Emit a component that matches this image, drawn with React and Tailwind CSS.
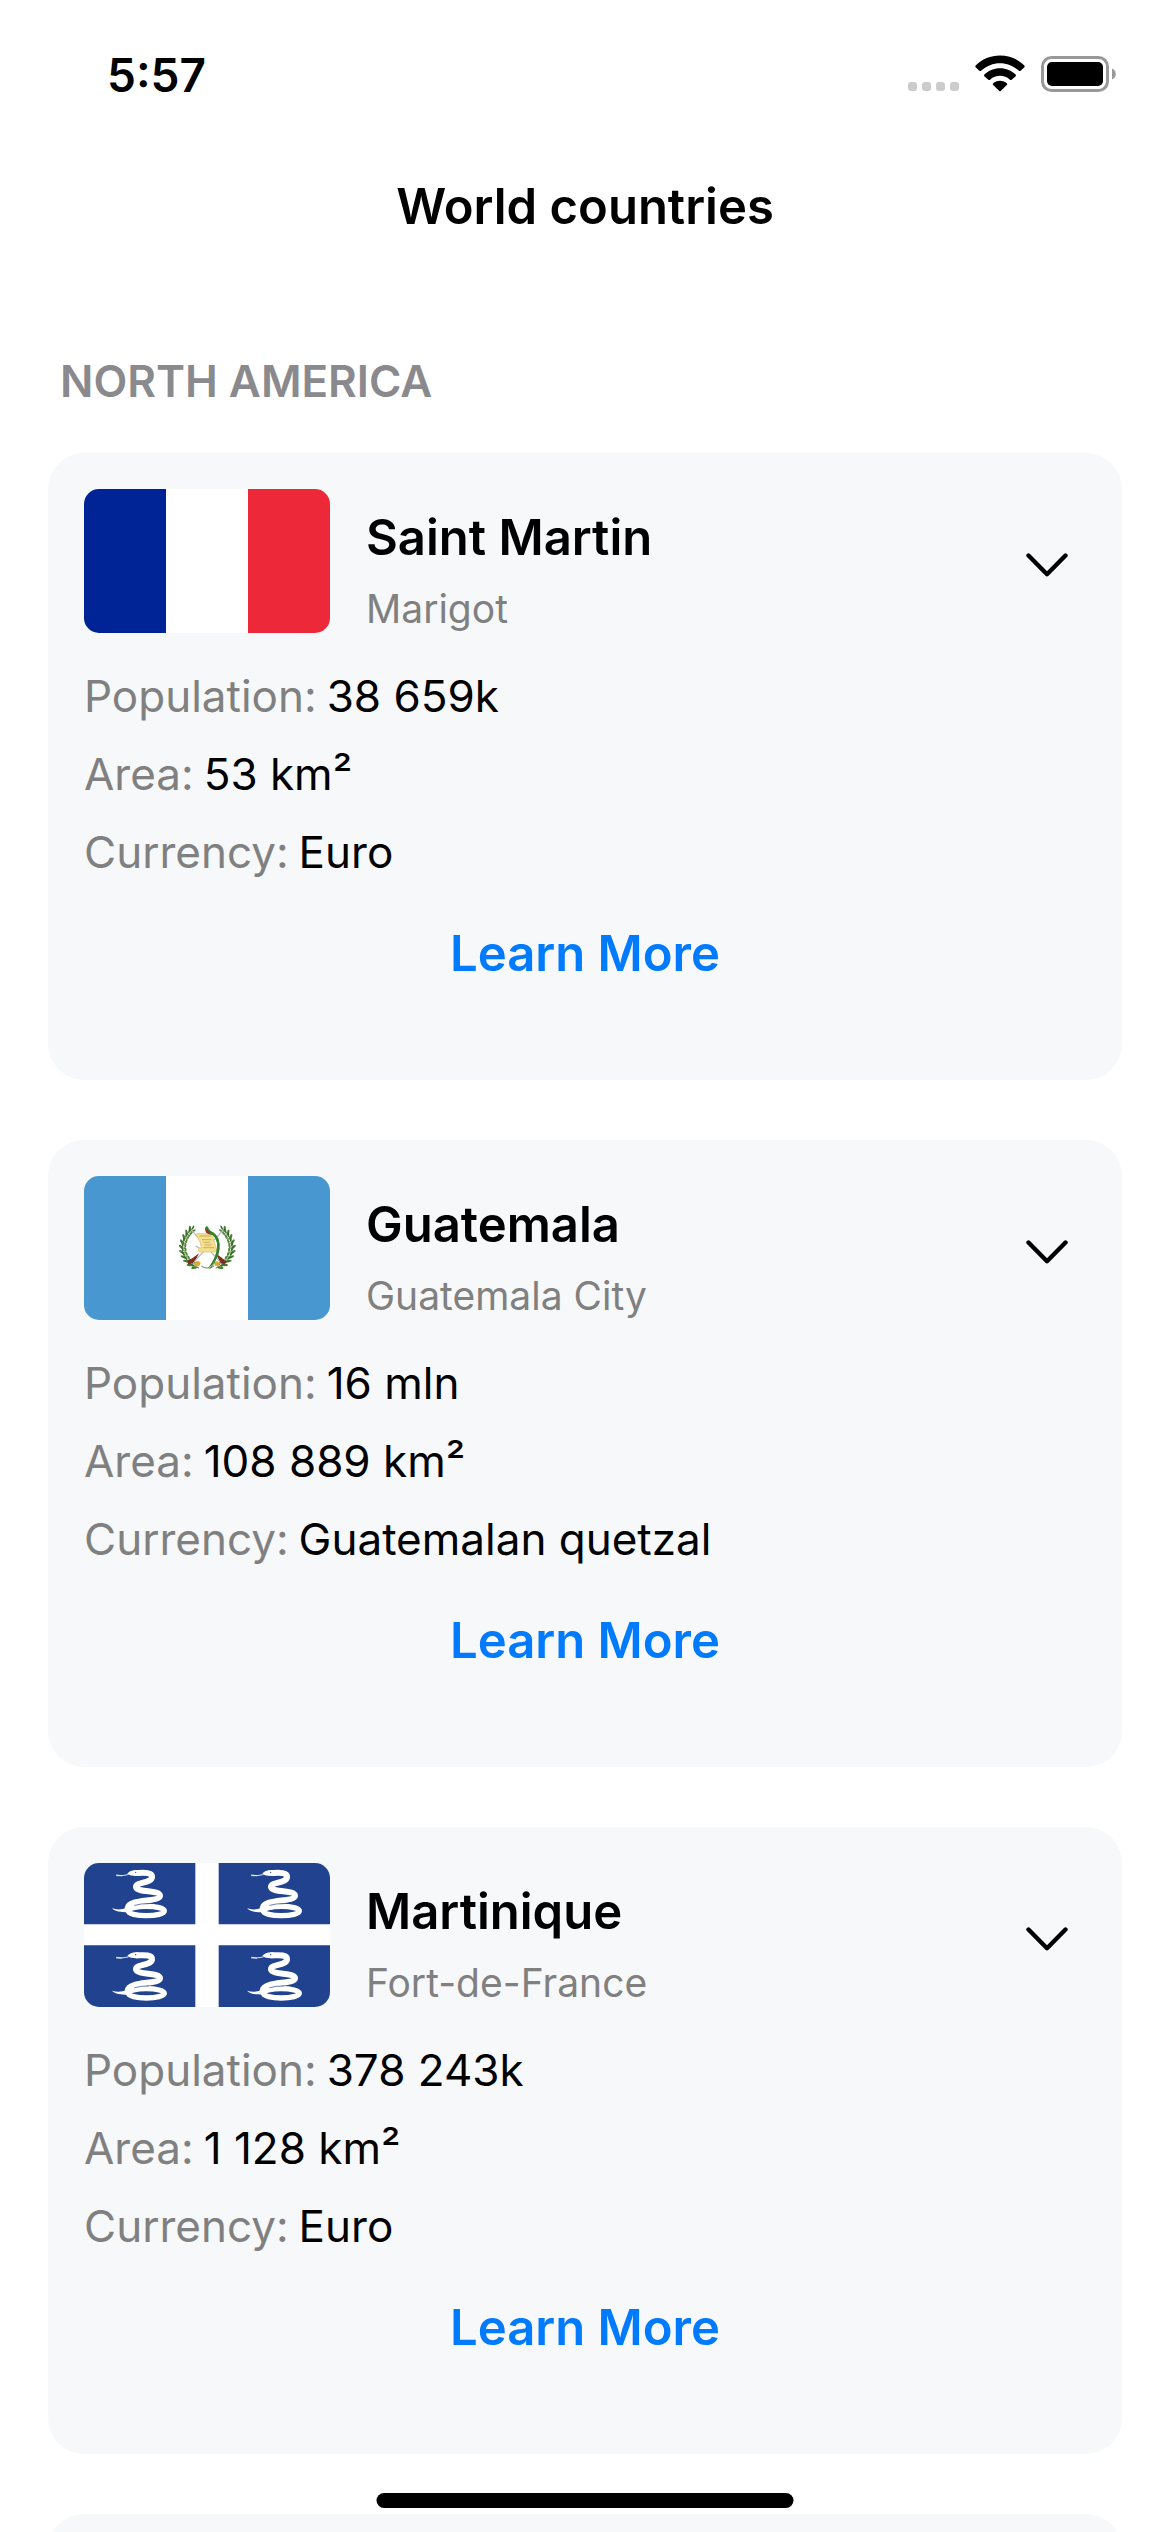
import React, { useState } from "react";

const FLAG = "h-36 w-[246px] shrink-0 rounded-[15px]";

function SaintMartinFlag() {
  return (
    <svg viewBox="0 0 738 432" className={FLAG} role="img" aria-label="Flag of Saint Martin">
      <rect width="738" height="432" fill="#fff" />
      <rect width="246" height="432" fill="#002395" />
      <rect x="492" width="246" height="432" fill="#ed2939" />
    </svg>
  );
}

const BRANCH = [
  [324, 160], [314, 170], [306, 182], [300, 196], [297, 210], [298, 224], [302, 238], [309, 250], [319, 261], [331, 269],
];

function Branch() {
  return (
    <g>
      <path d="M324 160C296 180 286 225 306 248C316 262 328 272 345 276" fill="none" stroke="#5c7a3c" strokeWidth="3" />
      {BRANCH.map(([x, y], i) => (
        <g key={y} transform={`translate(${x} ${y}) rotate(${30 - i * 11})`}>
          <ellipse cx="-6" cy="-2" rx="3.6" ry="9" fill="#447c33" transform="rotate(-32)" />
          <ellipse cx="6" cy="-1" rx="3.4" ry="8.5" fill="#528a3d" transform="rotate(32)" />
          <ellipse cx="0" cy="-6" rx="2.6" ry="7" fill="#3a6b2a" />
          <circle cx="3" cy="4" r="2.2" fill="#d9b9ae" />
        </g>
      ))}
    </g>
  );
}

function GuatemalaFlag() {
  return (
    <svg viewBox="0 0 738 432" className={FLAG} role="img" aria-label="Flag of Guatemala">
      <rect width="738" height="432" fill="#fff" />
      <rect width="246" height="432" fill="#4997d0" />
      <rect x="492" width="246" height="432" fill="#4997d0" />
      <Branch />
      <g transform="translate(740 0) scale(-1 1)">
        <Branch />
      </g>
      <path d="M324 164L412 262M416 164L326 262M335 210L356 222" stroke="#b4b4ba" strokeWidth="3.5" fill="none" />
      <path d="M345 232L326 246L310 254L312 265L326 262L338 246Z" fill="#7b2e20" />
      <path d="M395 232L414 246L426 256L422 266L410 260L402 246Z" fill="#7b2e20" />
      <path d="M330 262l10 -8l10 5l-3 10l-12 2zM390 260l9 -5l9 6l-4 9l-11 -1z" fill="#e0a92c" />
      <path d="M322 269l14 8M404 277l14 -8M352 270c12 8 26 8 38 0" stroke="#548b3f" strokeWidth="3" fill="none" />
      <path d="M338 173H385Q391 176 387 185Q392 202 398 221Q398 229 390 228H346Q340 224 345 216H352Q351 200 343 188Q336 180 338 173Z" fill="#f4e08e" stroke="#d9bd62" strokeWidth="2" />
      <path d="M346 180h36M354 191h28M358 199h20M362 207h20M358 215h32" stroke="#c3a04c" strokeWidth="2.4" />
      <path d="M363 156q4 -8 9 -3q2 8 8 12q16 6 24 24q10 32 -8 62q-8 16 -24 26q18 -24 24 -46q10 -36 -10 -54q-16 -2 -20 -10q-4 -6 -3 -11z" fill="#34802b" />
      <path d="M364 164q2 7 9 9l5 -5q-7 -3 -10 -8z" fill="#a32a23" />
      <path d="M398 240q-4 22 -20 38" stroke="#34802b" strokeWidth="2.5" fill="none" />
    </svg>
  );
}

function Snake({ x, y }) {
  return (
    <g transform={`translate(${x} ${y})`} fill="none" stroke="#fff" strokeLinecap="round" strokeLinejoin="round">
      <path d="M98 36L113 38L132 35M98 38H113" strokeWidth="2.5" />
      <path d="M130 32C136 24 146 20 162 21L166 38C152 40 138 38 130 32Z" fill="#fff" stroke="none" />
      <path d="M160 30C180 29 206 27 204 43C200 62 156 56 156 72C160 90 228 80 228 99C226 118 134 106 131 136" strokeWidth="18" />
      <path d="M84 136C100 141 112 140 128 134L132 148C110 148 94 146 84 136Z" fill="#fff" stroke="none" />
      <ellipse cx="187" cy="144" rx="54" ry="14" strokeWidth="16" />
      <path d="M152 127Q172 121 194 122" stroke="#21428f" strokeWidth="2" />
      <circle cx="155" cy="28" r="2" fill="#21428f" stroke="none" />
    </g>
  );
}

function MartiniqueFlag() {
  return (
    <svg viewBox="0 0 738 432" className={FLAG} role="img" aria-label="Flag of Martinique">
      <rect width="738" height="432" fill="#21428f" />
      <path d="M334 0H404V432H334ZM0 184H738V247H0Z" fill="#fff" />
      <Snake x={0} y={0} />
      <Snake x={405} y={0} />
      <Snake x={0} y={247} />
      <Snake x={405} y={247} />
    </svg>
  );
}

const COUNTRIES = [
  { name: "Saint Martin", capital: "Marigot", population: "38 659k", area: "53 km²", currency: "Euro", Flag: SaintMartinFlag },
  { name: "Guatemala", capital: "Guatemala City", population: "16 mln", area: "108 889 km²", currency: "Guatemalan quetzal", Flag: GuatemalaFlag },
  { name: "Martinique", capital: "Fort-de-France", population: "378 243k", area: "1 128 km²", currency: "Euro", Flag: MartiniqueFlag },
];

function StatusBar() {
  return (
    <div className="flex h-[141px] shrink-0 items-center justify-between pr-[53px] pl-[107px]">
      <span className="pt-2 text-[46px] leading-[60px] font-semibold">5:57</span>
      <div className="flex items-center gap-4 pt-1.5">
        <div className="flex gap-[5px] self-end pb-px">
          <span className="size-[9px] rounded-[3px] bg-[#cccccc]" />
          <span className="size-[9px] rounded-[3px] bg-[#cccccc]" />
          <span className="size-[9px] rounded-[3px] bg-[#cccccc]" />
          <span className="size-[9px] rounded-[3px] bg-[#cccccc]" />
        </div>
        <svg viewBox="0 0 150 110" className="h-[37px] w-[50px]" role="img" aria-label="Wi-Fi">
          <path d="M75 1C103 1 129 12 148 31Q150 34 148 36L137 47Q134 49 131 46C115 32 96 24 75 24S35 32 19 46Q16 49 13 47L2 36Q0 34 2 31C21 12 47 1 75 1Z" />
          <path d="M75 39C93 39 110 46 122 58Q124 61 122 63L110 74Q107 76 104 73C96 66 86 62 75 62S54 66 46 73Q43 76 40 74L28 63Q26 61 28 58C40 46 57 39 75 39Z" />
          <path d="M75 77C83 77 91 80 96 85Q98 87 96 89L78 107Q75 110 72 107L54 89Q52 87 54 85C59 80 67 77 75 77Z" />
        </svg>
        <svg viewBox="0 0 76 36" className="h-9 w-[76px]" role="img" aria-label="Battery full">
          <rect x="1.5" y="1.5" width="65" height="33" rx="9" fill="none" stroke="#999" strokeWidth="3" />
          <rect x="6" y="6" width="56" height="24" rx="5" />
          <path d="M71 12.5C76 14.5 76 21.5 71 23.5Z" fill="#999" />
        </svg>
      </div>
    </div>
  );
}

function Detail({ label, value }) {
  return (
    <div className="flex gap-2.5 py-[9px] text-[44px] leading-[60px]">
      <dt className="text-[#808080]">{label}:</dt>
      <dd>{value}</dd>
    </div>
  );
}

function CountryCard({ country }) {
  const [open, setOpen] = useState(true);
  const { name, capital, population, area, currency, Flag } = country;
  return (
    <article className="rounded-[36px] bg-[#f7f8fa] p-9">
      <div className="flex items-center">
        <Flag />
        <div className="min-w-0 grow pt-4 pl-9">
          <h3 className="text-[49px] leading-[66px] font-semibold">{name}</h3>
          <p className="pt-3.5 text-[39px] leading-[48px] text-[#808080]">{capital}</p>
        </div>
        <button type="button" aria-expanded={open} aria-label={`Details for ${name}`} onClick={() => setOpen(!open)} className="flex size-[78px] items-center justify-center">
          <svg viewBox="0 0 42 24" className="mt-2 h-6 w-[42px]" fill="none" stroke="currentColor" strokeWidth="4.4" strokeLinecap="round" strokeLinejoin="round">
            <path d="M2.5 2.5L21 21.2L39.5 2.5" />
          </svg>
        </button>
      </div>
      {open && (
        <>
          <dl className="pt-6">
            <Detail label="Population" value={population} />
            <Detail label="Area" value={area} />
            <Detail label="Currency" value={currency} />
          </dl>
          <div className="flex justify-center pt-[30px] pb-[57px]">
            <button type="button" className="text-[49px] leading-[66px] font-semibold text-[#007aff]">Learn More</button>
          </div>
        </>
      )}
    </article>
  );
}

export default function App() {
  return (
    <div className="flex h-screen flex-col overflow-hidden bg-white font-['Inter','Liberation_Sans',sans-serif] text-black">
      <StatusBar />
      <header className="flex h-[132px] shrink-0 items-center justify-center">
        <h1 className="text-[49px] leading-[66px] font-semibold">World countries</h1>
      </header>
      <main className="min-h-0 grow overflow-y-auto px-12 [scrollbar-width:none]">
        <h2 className="px-3 pt-[78px] pb-[42px] text-[44px] leading-[60px] font-semibold text-[#8a8a8e] uppercase">North America</h2>
        <div className="flex flex-col gap-[60px]">
          {COUNTRIES.map((country) => (
            <CountryCard key={country.name} country={country} />
          ))}
          <div className="h-[216px] rounded-[36px] bg-[#f7f8fa]" />
        </div>
      </main>
      <div className="fixed bottom-6 left-1/2 h-[15px] w-[417px] -translate-x-1/2 rounded-full bg-black" />
    </div>
  );
}
